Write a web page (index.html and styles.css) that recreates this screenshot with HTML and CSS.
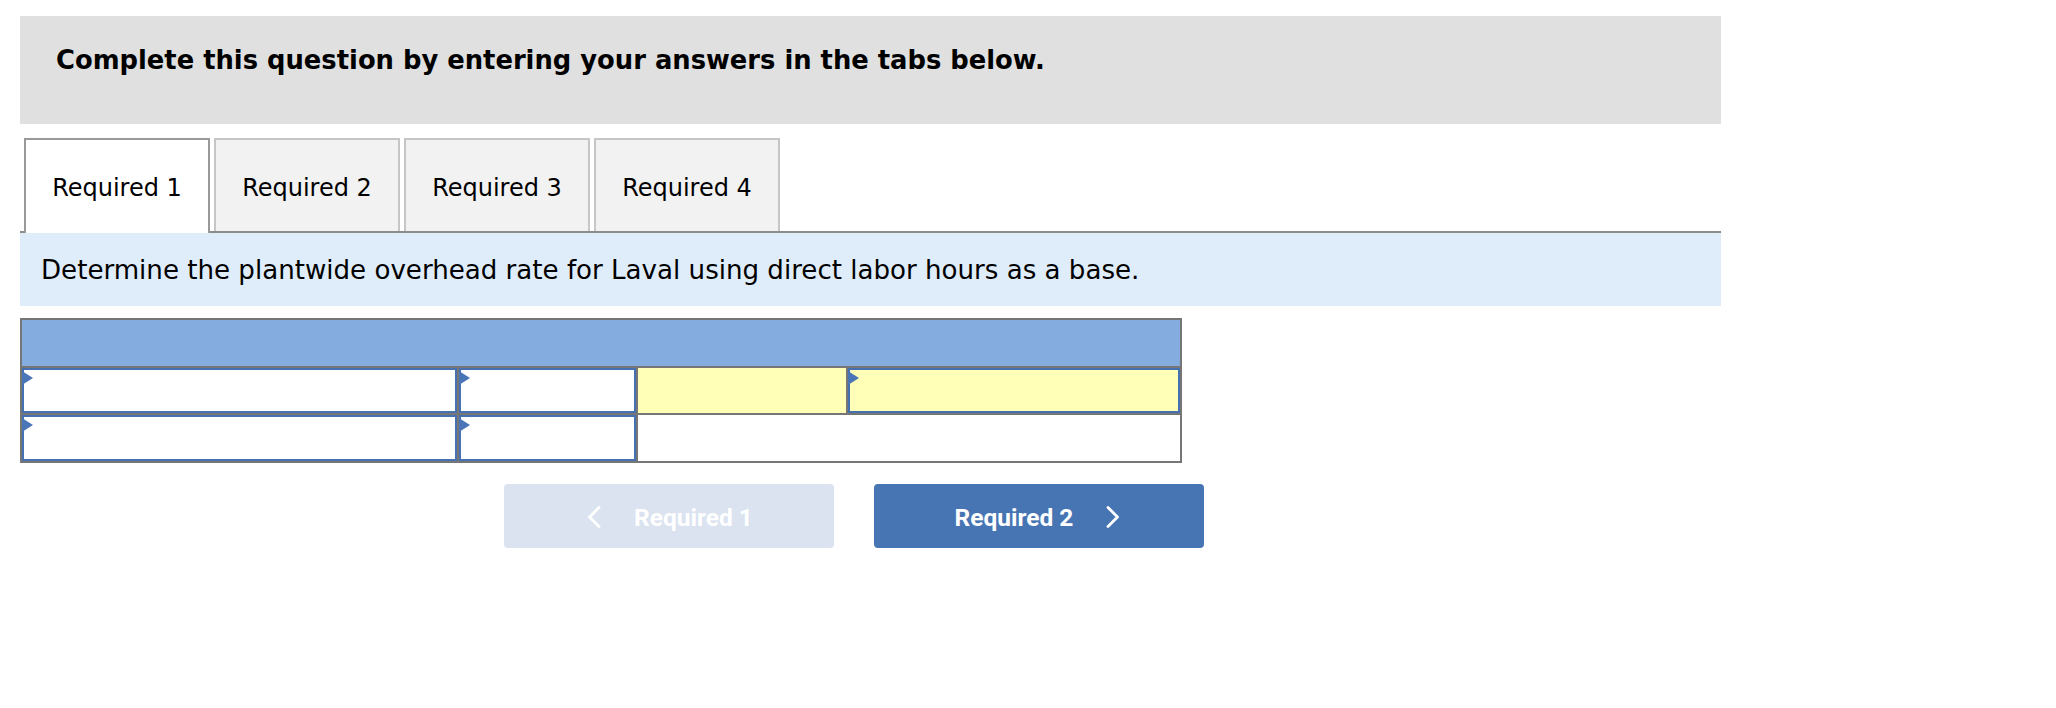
FILE: index.html
```html
<!DOCTYPE html>
<html lang="en">
<head>
<meta charset="utf-8">
<title>Complete this question</title>
<link rel="stylesheet" href="styles.css">
</head>
<body>
<div class="page">
  <div class="title-box">
    <h1 class="title">Complete this question by entering your answers in the tabs below.</h1>
  </div>

  <div class="tabs">
    <div class="tab active">Required 1</div>
    <div class="tab">Required 2</div>
    <div class="tab">Required 3</div>
    <div class="tab">Required 4</div>
  </div>

  <div class="instr">Determine the plantwide overhead rate for Laval using direct labor hours as a base.</div>

  <div class="sheet">
    <div class="hdr"></div>
    <div class="cell"><div class="inp"><span class="flag"></span></div></div>
    <div class="cell"><div class="inp"><span class="flag"></span></div></div>
    <div class="cell yellow"></div>
    <div class="cell"><div class="inp yellow"><span class="flag"></span></div></div>
    <div class="cell"><div class="inp"><span class="flag"></span></div></div>
    <div class="cell"><div class="inp"><span class="flag"></span></div></div>
    <div class="cell span2"></div>
  </div>

  <div class="nav">
    <button class="btn prev" type="button">
      <svg class="chev" width="14" height="22" viewBox="0 0 14 22"><polyline points="12,1.5 2.5,11 12,20.5" fill="none" stroke="#ffffff" stroke-width="2.8" stroke-linecap="round" stroke-linejoin="round"/></svg>
      <span>Required 1</span>
    </button>
    <button class="btn next" type="button">
      <span>Required 2</span>
      <svg class="chev" width="14" height="22" viewBox="0 0 14 22"><polyline points="2,1.5 11.5,11 2,20.5" fill="none" stroke="#ffffff" stroke-width="2.8" stroke-linecap="round" stroke-linejoin="round"/></svg>
    </button>
  </div>
</div>
</body>
</html>
```

FILE: styles.css
```css
html, body {
  margin: 0;
  padding: 0;
  background: #ffffff;
}

.page {
  padding: 16px 0 0 20px;
  width: 1701px;
  font-family: "DejaVu Sans", Verdana, sans-serif;
  color: #000000;
}

.title-box {
  background: #e0e0e0;
  height: 108px;
  box-sizing: border-box;
  padding: 30px 36px 0 36px;
}

.title {
  margin: 0;
  font-size: 25.8px;
  font-weight: bold;
  line-height: 29px;
}

.tabs {
  margin-top: 14px;
  height: 93px;
  display: flex;
  align-items: flex-start;
  gap: 4px;
  padding-left: 4px;
  border-bottom: 2px solid #8c8c8c;
}

.tab {
  width: 186px;
  height: 93px;
  box-sizing: border-box;
  border: 2px solid #c6c6c6;
  border-bottom: none;
  background: #f2f2f2;
  display: flex;
  align-items: center;
  justify-content: center;
  font-size: 24px;
  padding-top: 4px;
}

.tab.active {
  background: #ffffff;
  border-color: #999999;
  height: 95px;
  margin-bottom: -2px;
  position: relative;
  padding-top: 2px;
}

.instr {
  background: #dfecf9;
  height: 73px;
  box-sizing: border-box;
  padding-left: 21px;
  display: flex;
  align-items: center;
  font-size: 26.1px;
}

.sheet {
  margin-top: 12px;
  display: inline-grid;
  grid-template-columns: 435px 177px 208px 332px;
  grid-template-rows: 46px 45px 46px;
  gap: 2px;
  padding: 2px;
  background: #767676;
  vertical-align: top;
}

.hdr {
  grid-column: 1 / span 4;
  background: #84acdf;
}

.cell {
  background: #ffffff;
  position: relative;
}

.cell.yellow {
  background: #ffffb7;
}

.cell.span2 {
  grid-column: 3 / span 2;
}

.inp {
  box-sizing: border-box;
  height: 100%;
  border: 2px solid #4671b0;
  background: #ffffff;
  position: relative;
}

.inp.yellow {
  background: #ffffb7;
}

.flag {
  position: absolute;
  left: -2px;
  top: 1px;
  width: 0;
  height: 0;
  border-top: 7px solid transparent;
  border-bottom: 7px solid transparent;
  border-left: 11px solid #4a76b8;
}

.nav {
  display: flex;
  gap: 40px;
  margin-top: 21px;
  padding-left: 484px;
}

.btn {
  width: 330px;
  height: 64px;
  border: none;
  border-radius: 4px;
  display: flex;
  align-items: center;
  justify-content: center;
  gap: 33px;
  font-family: Roboto, "Liberation Sans", sans-serif;
  font-weight: bold;
  font-size: 24.5px;
  color: #ffffff;
  padding: 2px 0 0 0;
}

.btn.prev {
  background: #dae3ef;
  padding-left: 2px;
}

.btn.next {
  background: #4775b3;
  padding-right: 3px;
}

.chev {
  display: block;
}
```
